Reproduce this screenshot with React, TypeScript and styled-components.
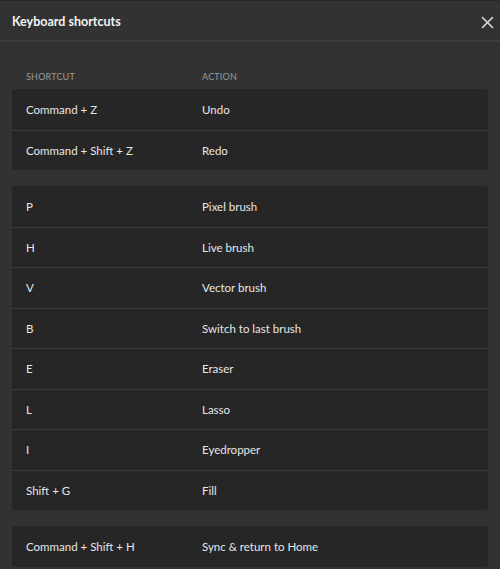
import React, { FC } from "react";
import styled, { createGlobalStyle } from "styled-components";

const COLORS = {
  panel: "#323232",
  card: "#262626",
  divider: "#3b3b3b",
  text: "#e6e6e6",
  muted: "#9a9a9a",
};

type Shortcut = { keys: string; action: string };

const GROUPS: Shortcut[][] = [
  [
    { keys: "Command + Z", action: "Undo" },
    { keys: "Command + Shift + Z", action: "Redo" },
  ],
  [
    { keys: "P", action: "Pixel brush" },
    { keys: "H", action: "Live brush" },
    { keys: "V", action: "Vector brush" },
    { keys: "B", action: "Switch to last brush" },
    { keys: "E", action: "Eraser" },
    { keys: "L", action: "Lasso" },
    { keys: "I", action: "Eyedropper" },
    { keys: "Shift + G", action: "Fill" },
  ],
  [{ keys: "Command + Shift + H", action: "Sync & return to Home" }],
];

const GlobalStyle = createGlobalStyle`
  html, body {
    margin: 0;
    background: ${COLORS.panel};
    font-family: Lato, "Open Sans", sans-serif;
  }
`;

const CloseIcon: FC = () => (
  <svg width="13" height="13" viewBox="0 0 13 13">
    <path
      d="M1.5 1.5 L11.5 11.5 M11.5 1.5 L1.5 11.5"
      stroke="#dcdcdc"
      strokeWidth="1.6"
      strokeLinecap="round"
    />
  </svg>
);

const App: FC = () => (
  <>
    <GlobalStyle />
    <Dialog>
      <Header>
        <h1>Keyboard shortcuts</h1>
        <CloseButton aria-label="Close">
          <CloseIcon />
        </CloseButton>
      </Header>
      <Body>
        <ColumnLabels>
          <span>Shortcut</span>
          <span>Action</span>
        </ColumnLabels>
        {GROUPS.map((group, i) => (
          <Card key={i}>
            {group.map((s) => (
              <Row key={s.keys}>
                <span>{s.keys}</span>
                <span>{s.action}</span>
              </Row>
            ))}
          </Card>
        ))}
      </Body>
    </Dialog>
  </>
);

export default App;

const Dialog = styled.div`
  width: 500px;
  height: 569px;
  overflow: hidden;
  background: ${COLORS.panel};
  border-top: 1px solid #262626;
  box-sizing: border-box;
`;

const Header = styled.div`
  height: 39px;
  display: flex;
  align-items: center;
  justify-content: space-between;
  padding: 0 2px 0 12px;
  border-bottom: 2px solid ${COLORS.divider};

  h1 {
    margin: 0;
    font-size: 12.5px;
    font-weight: bold;
    color: #f2f2f2;
    padding-top: 1px;
  }
`;

const CloseButton = styled.button`
  width: 22px;
  height: 22px;
  display: flex;
  align-items: center;
  justify-content: center;
  background: none;
  border: none;
  padding: 0;
  margin-top: 4px;
`;

const Body = styled.div`
  padding: 28px 12px 0;
  display: flex;
  flex-direction: column;
  gap: 16px;
`;

const ColumnLabels = styled.div`
  display: grid;
  grid-template-columns: 176px 1fr;
  padding: 0 14px;
  margin-bottom: -11px;
  font-size: 9px;
  letter-spacing: 0.2px;
  text-transform: uppercase;
  color: ${COLORS.muted};
  line-height: 14px;
`;

const Card = styled.div`
  background: ${COLORS.card};
  border-radius: 4px;
`;

const Row = styled.div`
  display: grid;
  grid-template-columns: 176px 1fr;
  align-items: center;
  height: 40.5px;
  box-sizing: border-box;
  padding: 0 14px;
  font-size: 11.5px;
  color: ${COLORS.text};

  & + & {
    border-top: 1px solid ${COLORS.divider};
  }
`;
